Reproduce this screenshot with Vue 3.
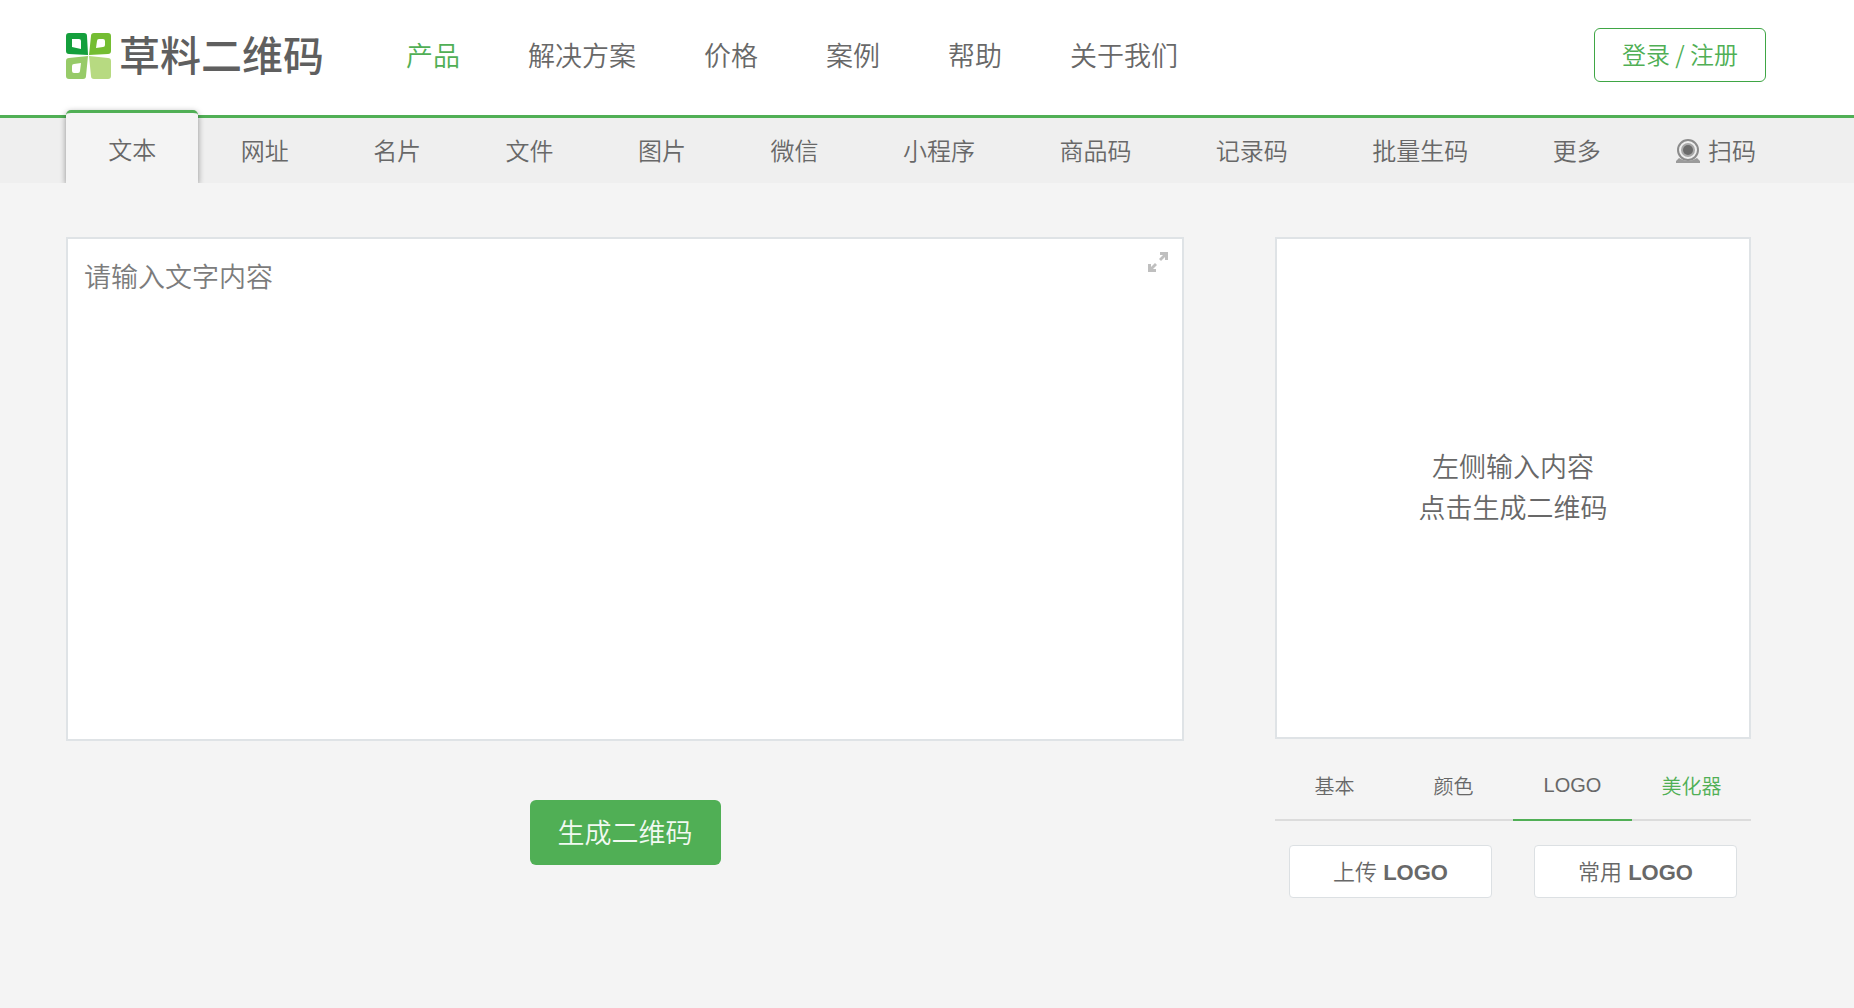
<script setup>
import { ref } from 'vue'

const navItems = ['产品', '解决方案', '价格', '案例', '帮助', '关于我们']
const codeTypes = ['文本', '网址', '名片', '文件', '图片', '微信', '小程序', '商品码', '记录码', '批量生码', '更多']
const styleTabs = ['基本', '颜色', 'LOGO', '美化器']

const activeType = ref('文本')
const activeStyle = ref('LOGO')
const content = ref('')
</script>

<template>
  <div class="page">
    <header class="header">
      <a class="brand" href="#">
        <svg class="brand-mark" viewBox="0 0 45 46" aria-hidden="true">
          <path fill="#149f3c" fill-rule="evenodd" d="M3 0H18Q21 0 21 3L22 22L3 21Q0 21 0 18V3Q0 0 3 0ZM6 6V14L15 16V8Q15 6 13 6Z" />
          <path fill="#74bd32" fill-rule="evenodd" d="M28 0H42Q45 0 45 3V18Q45 21 42 21L23 22L25 3Q25 0 28 0ZM33 6Q31 6 31 8L30 15L37 14Q39 14 39 12V8Q39 6 37 6Z" />
          <path fill="#97cb68" fill-rule="evenodd" d="M3 25L22 23L20 43Q20 46 17 46H3Q0 46 0 43V28Q0 25 3 25ZM8 31Q6 31 6 33V38Q6 40 8 40H12Q14 40 14 38L15 30Z" />
          <path fill="#b7da81" d="M23 23L42 25Q45 25 45 28V43Q45 46 42 46H28Q25 46 25 43Z" />
        </svg>
        <span class="brand-name">草料二维码</span>
      </a>
      <nav class="main-nav">
        <a v-for="(item, i) in navItems" :key="item" href="#" :class="{ current: i === 0 }">{{ item }}</a>
      </nav>
      <button class="login" type="button">登录 / 注册</button>
    </header>

    <nav class="type-bar">
      <div class="types">
        <a
          v-for="t in codeTypes"
          :key="t"
          href="#"
          class="type"
          :class="{ active: t === activeType }"
          @click.prevent="activeType = t"
        >{{ t }}</a>
      </div>
      <a class="scan" href="#">
        <svg viewBox="0 0 24 24" aria-hidden="true">
          <circle cx="12" cy="11" r="10" fill="none" stroke="#8c8c8c" stroke-width="2" />
          <circle cx="12" cy="11" r="7" fill="#a8a8a8" />
          <circle cx="12" cy="11" r="5" fill="#6c6c6c" />
          <path d="M3 19L0 22V24H24V22L21 19Q12 25 3 19Z" fill="#9b9b9b" />
        </svg>
        <span>扫码</span>
      </a>
    </nav>

    <main class="workspace">
      <section class="editor">
        <div class="input-box">
          <textarea v-model="content" aria-label="文字内容" placeholder="请输入文字内容"></textarea>
          <button class="expand" type="button" aria-label="全屏">
            <svg viewBox="0 0 22 22" aria-hidden="true">
              <g fill="#bfbfbf">
                <path d="M13 1H21V9H18V6L14 10L12 8L16 4H13Z" />
                <path d="M9 21H1V13H4V16L8 12L10 14L6 18H9Z" />
              </g>
            </svg>
          </button>
        </div>
        <button class="generate" type="button">生成二维码</button>
      </section>

      <aside class="preview">
        <div class="canvas">
          <p>左侧输入内容<br />点击生成二维码</p>
        </div>
        <div class="style-tabs" role="tablist">
          <button
            v-for="s in styleTabs"
            :key="s"
            type="button"
            role="tab"
            :aria-selected="s === activeStyle"
            :class="{ active: s === activeStyle, accent: s === '美化器' }"
            @click="activeStyle = s"
          >{{ s }}</button>
        </div>
        <div class="logo-actions">
          <button type="button">上传 <b>LOGO</b></button>
          <button type="button">常用 <b>LOGO</b></button>
        </div>
      </aside>
    </main>
  </div>
</template>

<style>
body {
  margin: 0;
  background: #f4f4f4;
}
</style>

<style scoped>
.page {
  font-family: "Liberation Sans", "Noto Sans CJK SC", sans-serif;
  font-weight: 350;
  color: #686868;
}

.page * {
  box-sizing: border-box;
}

a {
  color: inherit;
  text-decoration: none;
}

button {
  font: inherit;
  color: inherit;
  padding: 0;
  border: 0;
  background: none;
  cursor: pointer;
}

.header {
  display: flex;
  align-items: center;
  height: 118px;
  padding: 0 88px 4px 66px;
  background: #fff;
  border-bottom: 3px solid #50af55;
}

.brand {
  display: flex;
  align-items: center;
  gap: 8px;
  margin-right: 82px;
}

.brand-mark {
  width: 45px;
  height: 46px;
}

.brand-name {
  padding-top: 2px;
  font-size: 41px;
  line-height: 46px;
  font-weight: 500;
  color: #5f5f5f;
}

.main-nav {
  display: flex;
  gap: 68px;
  padding-top: 2px;
  font-size: 27px;
  line-height: 40px;
}

.main-nav .current {
  color: #50af55;
}

.login {
  width: 172px;
  height: 54px;
  margin-bottom: 2px;
  margin-left: auto;
  padding-bottom: 2px;
  border: 1px solid #3fa645;
  border-radius: 6px;
  font-family: "Noto Sans CJK SC", sans-serif;
  font-size: 24px;
  color: #50af55;
}

.type-bar {
  display: flex;
  height: 65px;
  padding: 0 88px 0 66px;
  background: #efefef;
  font-size: 24px;
  line-height: 68px;
  clip-path: inset(-16px 0 0 0);
}

.types {
  flex: 1;
  display: flex;
}

.type {
  flex: 1 1 auto;
  text-align: center;
}

.type.active {
  margin-top: -8px;
  padding-top: 4px;
  border-top: 3px solid #50af55;
  border-radius: 5px 5px 0 0;
  background: #f4f4f4;
  box-shadow: 0 2px 6px rgba(0, 0, 0, 0.4);
}

.scan {
  display: flex;
  align-items: center;
  gap: 8px;
  width: 123px;
  padding-left: 33px;
}

.scan span {
  padding-top: 2px;
}

.scan svg {
  width: 24px;
  height: 24px;
}

.workspace {
  display: flex;
  gap: 91px;
  padding: 54px 103px 108px 66px;
}

.editor {
  flex: 1;
  display: flex;
  flex-direction: column;
  align-items: center;
}

.input-box {
  position: relative;
  width: 100%;
}

textarea {
  display: block;
  width: 100%;
  height: 504px;
  padding: 19px 16px;
  border: 2px solid #dfe3e6;
  border-radius: 0;
  outline: 0;
  resize: none;
  background: #fff;
  font: inherit;
  font-size: 27px;
  line-height: 40px;
  color: #686868;
}

textarea::placeholder {
  color: #7c7c7c;
  opacity: 1;
}

.expand {
  position: absolute;
  top: 14px;
  right: 15px;
  width: 22px;
  height: 22px;
}

.expand svg {
  display: block;
}

.generate {
  width: 191px;
  height: 65px;
  margin-top: 59px;
  padding-bottom: 2px;
  border-radius: 6px;
  background: #50af55;
  color: #f1f9f1;
  font-size: 27px;
}

.preview {
  width: 476px;
}

.canvas {
  display: flex;
  align-items: center;
  justify-content: center;
  height: 502px;
  padding-top: 2px;
  border: 2px solid #dfe3e6;
  background: #fff;
  font-size: 27px;
  line-height: 41px;
  text-align: center;
}

.canvas p {
  margin: 0;
}

.style-tabs {
  display: flex;
  height: 82px;
  box-shadow: inset 0 -2px #dcdcdc;
  font-size: 20px;
}

.style-tabs button {
  flex: 1;
  padding-top: 12px;
  border-bottom: 2px solid transparent;
}

.style-tabs .active {
  border-bottom-color: #50af55;
}

.style-tabs .accent {
  color: #50af55;
}

.logo-actions {
  display: flex;
  justify-content: space-between;
  padding: 24px 14px 0;
}

.logo-actions button {
  width: 203px;
  height: 53px;
  padding-bottom: 4px;
  border: 1px solid #dce0e3;
  border-radius: 4px;
  background: #fff;
  font-size: 22px;
}

.logo-actions b {
  font-weight: 700;
}
</style>
